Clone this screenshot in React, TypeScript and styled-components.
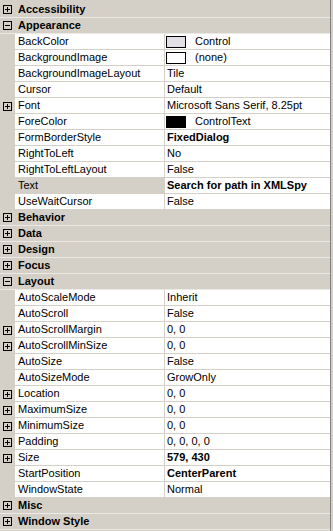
import React from 'react';
import styled, {createGlobalStyle} from "styled-components";

const GlobalStyle = createGlobalStyle`
  html, body {
    margin: 0;
    padding: 0;
    background: #D4D0C8;
  }
  * {
    box-sizing: border-box;
  }
`

const Frame = styled.div`
  display: flex;
  width: 333px;
  height: 531px;
  background: #D4D0C8;
  font-family: "Liberation Sans", Arial, sans-serif;
  font-size: 11px;
  color: #000;
  overflow: hidden;
`
const Grid = styled.div`
  display: flex;
  flex-direction: column;
  width: 331px;
  padding: 2px 0 0 0;
  border-right: 1px solid #808080;
`
const CategoryRow = styled.div`
  display: flex;
  align-items: center;
  height: 16px;
  border-bottom: 1px solid #ECEAE5;
  background: #D4D0C8;
`
const Margin = styled.div`
  display: flex;
  align-items: center;
  justify-content: flex-start;
  flex: none;
  width: 15px;
  height: 100%;
  padding: 0 0 0 3px;
  background: #D4D0C8;
`
const CategoryTitle = styled.span`
  padding: 0 0 0 3px;
  font-weight: 700;
  line-height: 15px;
  white-space: nowrap;
`
const PropRow = styled.div`
  display: flex;
  height: 16px;
`
const NameCell = styled.div<{ selected?: boolean }>`
  display: flex;
  align-items: center;
  flex: none;
  width: 150px;
  padding: 0 0 0 3px;
  line-height: 15px;
  white-space: nowrap;
  background: ${props => props.selected ? '#D4D0C8' : '#FFFFFF'};
  border-right: 1px solid #D4D0C8;
  border-bottom: 1px solid #D4D0C8;
`
const ValueCell = styled.div<{ bold?: boolean }>`
  display: flex;
  align-items: center;
  flex: 1;
  padding: 0 0 0 2px;
  line-height: 15px;
  white-space: nowrap;
  font-weight: ${props => props.bold ? 700 : 400};
  background: #FFFFFF;
  border-bottom: 1px solid #D4D0C8;
`
const Swatch = styled.span<{ color: string }>`
  display: inline-block;
  flex: none;
  width: 20px;
  height: 12px;
  margin: 0 9px 0 -1px;
  border: 1px solid #000;
  background: ${props => props.color};
`

function Expander({open}: { open: boolean }) {
  return (
    <svg width="9" height="9" viewBox="0 0 9 9" shapeRendering="crispEdges">
      <rect x="0.5" y="0.5" width="8" height="8" fill="none" stroke="#000"/>
      <line x1="2" y1="4.5" x2="7" y2="4.5" stroke="#000"/>
      {!open && <line x1="4.5" y1="2" x2="4.5" y2="7" stroke="#000"/>}
    </svg>
  );
}

type Prop = {
  name: string;
  value: string;
  bold?: boolean;
  expandable?: boolean;
  swatch?: string;
  selected?: boolean;
};

type Category = {
  title: string;
  open: boolean;
  props?: Prop[];
};

const categories: Category[] = [
  {title: 'Accessibility', open: false},
  {
    title: 'Appearance', open: true, props: [
      {name: 'BackColor', value: 'Control', swatch: '#E3DFE6'},
      {name: 'BackgroundImage', value: '(none)', swatch: '#FFFFFF'},
      {name: 'BackgroundImageLayout', value: 'Tile'},
      {name: 'Cursor', value: 'Default'},
      {name: 'Font', value: 'Microsoft Sans Serif, 8.25pt', expandable: true},
      {name: 'ForeColor', value: 'ControlText', swatch: '#000000'},
      {name: 'FormBorderStyle', value: 'FixedDialog', bold: true},
      {name: 'RightToLeft', value: 'No'},
      {name: 'RightToLeftLayout', value: 'False'},
      {name: 'Text', value: 'Search for path in XMLSpy', bold: true, selected: true},
      {name: 'UseWaitCursor', value: 'False'},
    ]
  },
  {title: 'Behavior', open: false},
  {title: 'Data', open: false},
  {title: 'Design', open: false},
  {title: 'Focus', open: false},
  {
    title: 'Layout', open: true, props: [
      {name: 'AutoScaleMode', value: 'Inherit'},
      {name: 'AutoScroll', value: 'False'},
      {name: 'AutoScrollMargin', value: '0, 0', expandable: true},
      {name: 'AutoScrollMinSize', value: '0, 0', expandable: true},
      {name: 'AutoSize', value: 'False'},
      {name: 'AutoSizeMode', value: 'GrowOnly'},
      {name: 'Location', value: '0, 0', expandable: true},
      {name: 'MaximumSize', value: '0, 0', expandable: true},
      {name: 'MinimumSize', value: '0, 0', expandable: true},
      {name: 'Padding', value: '0, 0, 0, 0', expandable: true},
      {name: 'Size', value: '579, 430', bold: true, expandable: true},
      {name: 'StartPosition', value: 'CenterParent', bold: true},
      {name: 'WindowState', value: 'Normal'},
    ]
  },
  {title: 'Misc', open: false},
  {title: 'Window Style', open: false},
];

function App() {
  return (
    <Frame>
      <GlobalStyle/>
      <Grid>
        {categories.map(cat => (
          <React.Fragment key={cat.title}>
            <CategoryRow>
              <Margin><Expander open={cat.open}/></Margin>
              <CategoryTitle>{cat.title}</CategoryTitle>
            </CategoryRow>
            {cat.open && cat.props?.map(p => (
              <PropRow key={p.name}>
                <Margin>{p.expandable && <Expander open={false}/>}</Margin>
                <NameCell selected={p.selected}>{p.name}</NameCell>
                <ValueCell bold={p.bold}>
                  {p.swatch && <Swatch color={p.swatch}/>}
                  {p.value}
                </ValueCell>
              </PropRow>
            ))}
          </React.Fragment>
        ))}
      </Grid>
    </Frame>
  );
}

export default App;
